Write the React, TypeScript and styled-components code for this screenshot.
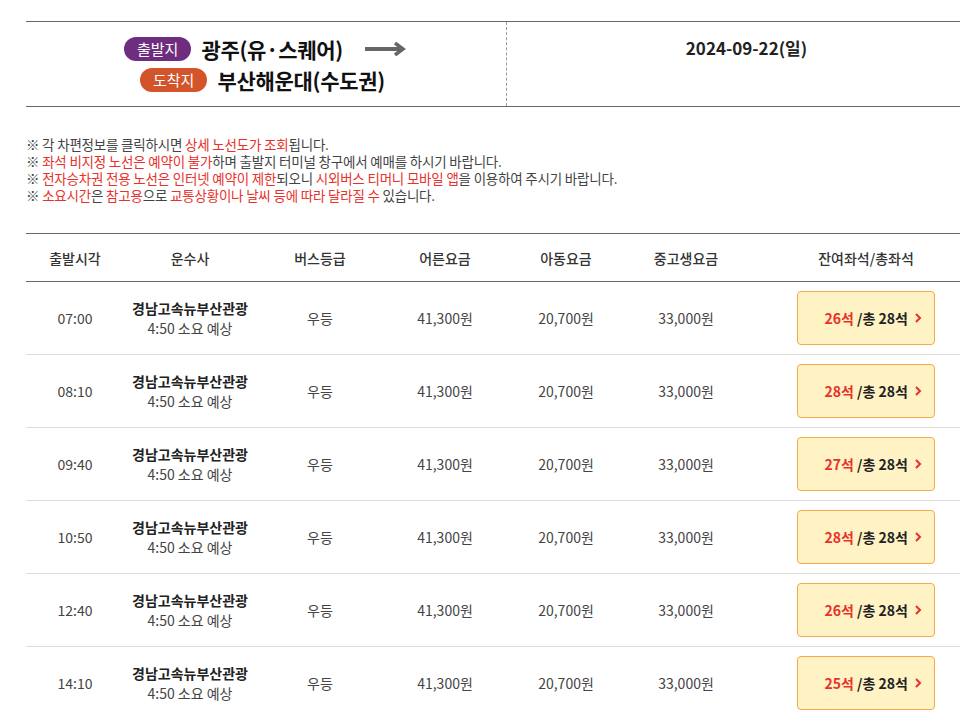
import React, { FC } from "react";
import styled, { createGlobalStyle } from "styled-components";

const Global = createGlobalStyle`
  body { margin: 0; overflow: hidden; background: #fff; font-family: "Noto Sans CJK KR", "Noto Sans", sans-serif; color: #333; }
`;

const Wrapper = styled.div`
  padding: 21px 0 0 26px;
  width: 960px;
`;
const Route = styled.div`
  display: grid;
  grid-template-columns: 481px 1fr;
  border-top: 1px solid #666;
  border-bottom: 1px solid #666;
  height: 84px;
`;
const RouteLeft = styled.div`
  border-right: 1px dashed #999;
  display: flex;
  flex-direction: column;
  justify-content: center;
  padding-left: 98px;
  gap: 1px;
`;
const Line = styled.div<{ $indent?: number }>`
  display: flex;
  align-items: center;
  gap: 10px;
  padding-left: ${(p) => p.$indent || 0}px;
`;
const Badge = styled.span<{ $bg: string }>`
  background: ${(p) => p.$bg};
  color: #fff;
  border-radius: 13px;
  font-size: 15px;
  padding: 1px 13px;
  line-height: 22px;
`;
const Place = styled.span`
  font-size: 21px;
  font-weight: 700;
  color: #111;
  letter-spacing: -0.3px;
`;
const DateCell = styled.div`
  text-align: center;
  padding: 13px 0 0 0;
  font-size: 17px;
  font-weight: 700;
  color: #222;
`;
const Notes = styled.div`
  margin-top: 29px;
  font-size: 13.5px;
  line-height: 17px;
  color: #444;
  letter-spacing: -0.2px;
`;
const Red = styled.span`
  color: #e8312b;
`;
const Table = styled.div`
  margin-top: 29px;
  border-top: 1px solid #666;
`;
const Row = styled.div<{ $head?: boolean }>`
  display: grid;
  grid-template-columns: 98px 132px 128px 122px 120px 120px 240px;
  align-items: center;
  height: ${(p) => (p.$head ? 47 : 72)}px;
  border-bottom: 1px solid ${(p) => (p.$head ? "#666" : "#ddd")};
  font-size: 14px;
  color: ${(p) => (p.$head ? "#333" : "#444")};
  font-weight: ${(p) => (p.$head ? 500 : 400)};
  text-align: center;
`;
const Company = styled.div`
  line-height: 20px;
  b { color: #222; font-weight: 700; }
`;
const SeatBtn = styled.div`
  justify-self: center;
  width: 138px;
  height: 54px;
  border: 1px solid #f5a94a;
  border-radius: 4px;
  background: #fff2c4;
  display: flex;
  align-items: center;
  justify-content: flex-end;
  padding-right: 12px;
  box-sizing: border-box;
  gap: 6px;
  font-weight: 700;
  color: #222;
`;
const Arrow: FC = () => (
  <svg width="8" height="12" viewBox="0 0 8 12">
    <path d="M2 2 L6 6 L2 10" stroke="#e8312b" strokeWidth="2" fill="none" />
  </svg>
);

const seats = [26, 28, 27, 28, 26, 25];
const times = ["07:00", "08:10", "09:40", "10:50", "12:40", "14:10"];

export default function App() {
  return (
    <Wrapper>
      <Global />
      <Route>
        <RouteLeft>
          <Line>
            <Badge $bg="#6e2d7e">출발지</Badge>
            <Place>광주(유·스퀘어)</Place>
            <svg width="42" height="14" viewBox="0 0 42 14" style={{ marginLeft: 12 }}>
              <path d="M0 7 H36" stroke="#666" strokeWidth="4" />
              <path d="M30 1 L38 7 L30 13" stroke="#666" strokeWidth="3.5" fill="none" />
            </svg>
          </Line>
          <Line $indent={16}>
            <Badge $bg="#d3542b">도착지</Badge>
            <Place>부산해운대(수도권)</Place>
          </Line>
        </RouteLeft>
        <DateCell>2024-09-22(일)</DateCell>
      </Route>
      <Notes>
        <div>※ 각 차편정보를 클릭하시면 <Red>상세 노선도가 조회</Red>됩니다.</div>
        <div>※ <Red>좌석 비지정 노선은 예약이 불가</Red>하며 출발지 터미널 창구에서 예매를 하시기 바랍니다.</div>
        <div>※ <Red>전자승차권 전용 노선은 인터넷 예약이 제한</Red>되오니 <Red>시외버스 티머니 모바일 앱</Red>을 이용하여 주시기 바랍니다.</div>
        <div>※ <Red>소요시간</Red>은 <Red>참고용</Red>으로 <Red>교통상황이나 날씨 등에 따라 달라질 수</Red> 있습니다.</div>
      </Notes>
      <Table>
        <Row $head>
          <div>출발시각</div><div>운수사</div><div>버스등급</div><div>어른요금</div>
          <div>아동요금</div><div>중고생요금</div><div>잔여좌석/총좌석</div>
        </Row>
        {times.map((t, i) => (
          <Row key={t}>
            <div>{t}</div>
            <Company><b>경남고속뉴부산관광</b><br />4:50 소요 예상</Company>
            <div>우등</div>
            <div>41,300원</div>
            <div>20,700원</div>
            <div>33,000원</div>
            <SeatBtn>
              <span><Red>{seats[i]}석</Red> /총 28석</span>
              <Arrow />
            </SeatBtn>
          </Row>
        ))}
      </Table>
    </Wrapper>
  );
}
